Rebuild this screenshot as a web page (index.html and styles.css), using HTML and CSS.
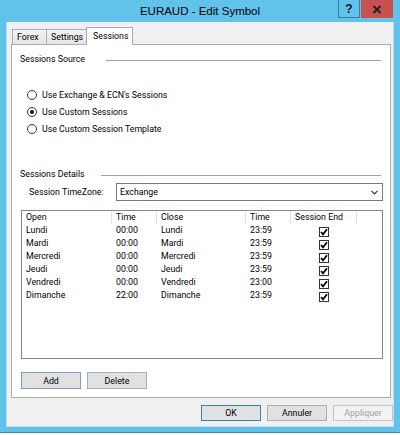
FILE: index.html
```html
<!DOCTYPE html>
<html>
<head>
<meta charset="utf-8">
<link rel="stylesheet" href="styles.css">
</head>
<body>
<div class="window">
  <div class="titlebar">
    <span class="title">EURAUD - Edit Symbol</span>
    <span class="cap-btn help">?</span>
    <span class="cap-btn close">
      <svg width="10" height="9" viewBox="0 0 10 9"><path d="M1.5 1 L8.5 8 M8.5 1 L1.5 8" stroke="#222" stroke-width="2" fill="none"/></svg>
    </span>
  </div>
  <div class="client">
    <div class="tabs">
      <span class="tab">Forex</span>
      <span class="tab">Settings</span>
      <span class="tab active">Sessions</span>
    </div>
    <div class="panel">
      <div class="group-head">
        <span>Sessions Source</span><span class="rule rule-source"></span>
      </div>
      <div class="radios">
        <div class="radio-row"><span class="radio"></span><span class="radio-label">Use Exchange &amp; ECN's Sessions</span></div>
        <div class="radio-row"><span class="radio checked"></span><span class="radio-label">Use Custom Sessions</span></div>
        <div class="radio-row"><span class="radio"></span><span class="radio-label">Use Custom Session Template</span></div>
      </div>
      <div class="group-head details">
        <span>Sessions Details</span><span class="rule rule-details"></span>
      </div>
      <div class="tz-row">
        <span class="tz-label">Session TimeZone:</span>
        <div class="select">
          <span>Exchange</span>
          <svg width="7" height="5" viewBox="0 0 7 5"><path d="M0.5 0.8 L3.5 3.8 L6.5 0.8" stroke="#333" stroke-width="1.2" fill="none"/></svg>
        </div>
      </div>
      <div class="grid">
        <div class="grid-row head">
          <span class="cell sep">Open</span>
          <span class="cell sep">Time</span>
          <span class="cell sep">Close</span>
          <span class="cell sep">Time</span>
          <span class="cell sep">Session End</span>
          <span class="cell"></span>
        </div>
        <div class="grid-row">
          <span class="cell">Lundi</span><span class="cell">00:00</span><span class="cell">Lundi</span><span class="cell">23:59</span>
          <span class="cell chk-cell"><span class="chk"><svg width="8" height="8" viewBox="0 0 8 8"><path d="M1 4 L3 6.3 L7 1.2" stroke="#000" stroke-width="1.8" fill="none"/></svg></span></span><span class="cell"></span>
        </div>
        <div class="grid-row">
          <span class="cell">Mardi</span><span class="cell">00:00</span><span class="cell">Mardi</span><span class="cell">23:59</span>
          <span class="cell chk-cell"><span class="chk"><svg width="8" height="8" viewBox="0 0 8 8"><path d="M1 4 L3 6.3 L7 1.2" stroke="#000" stroke-width="1.8" fill="none"/></svg></span></span><span class="cell"></span>
        </div>
        <div class="grid-row">
          <span class="cell">Mercredi</span><span class="cell">00:00</span><span class="cell">Mercredi</span><span class="cell">23:59</span>
          <span class="cell chk-cell"><span class="chk"><svg width="8" height="8" viewBox="0 0 8 8"><path d="M1 4 L3 6.3 L7 1.2" stroke="#000" stroke-width="1.8" fill="none"/></svg></span></span><span class="cell"></span>
        </div>
        <div class="grid-row">
          <span class="cell">Jeudi</span><span class="cell">00:00</span><span class="cell">Jeudi</span><span class="cell">23:59</span>
          <span class="cell chk-cell"><span class="chk"><svg width="8" height="8" viewBox="0 0 8 8"><path d="M1 4 L3 6.3 L7 1.2" stroke="#000" stroke-width="1.8" fill="none"/></svg></span></span><span class="cell"></span>
        </div>
        <div class="grid-row">
          <span class="cell">Vendredi</span><span class="cell">00:00</span><span class="cell">Vendredi</span><span class="cell">23:00</span>
          <span class="cell chk-cell"><span class="chk"><svg width="8" height="8" viewBox="0 0 8 8"><path d="M1 4 L3 6.3 L7 1.2" stroke="#000" stroke-width="1.8" fill="none"/></svg></span></span><span class="cell"></span>
        </div>
        <div class="grid-row">
          <span class="cell">Dimanche</span><span class="cell">22:00</span><span class="cell">Dimanche</span><span class="cell">23:59</span>
          <span class="cell chk-cell"><span class="chk"><svg width="8" height="8" viewBox="0 0 8 8"><path d="M1 4 L3 6.3 L7 1.2" stroke="#000" stroke-width="1.8" fill="none"/></svg></span></span><span class="cell"></span>
        </div>
      </div>
      <div class="grid-btns">
        <span class="btn focus">Add</span>
        <span class="btn">Delete</span>
      </div>
    </div>
    <div class="dlg-btns">
      <span class="btn default">OK</span>
      <span class="btn">Annuler</span>
      <span class="btn disabled">Appliquer</span>
    </div>
  </div>
</div>
</body>
</html>
```
FILE: styles.css
```css
body {
  margin: 0;
  width: 400px;
  height: 435px;
  overflow: hidden;
  background: #ffffff;
  font-family: Roboto, "Liberation Sans", sans-serif;
  font-size: 8.8px;
  color: #000;
}

.window {
  width: 400px;
  height: 433px;
  box-sizing: border-box;
  background: #62c3ea;
  border-bottom: 1px solid #3a8db0;
  padding: 0 6px 5px 6px;
  display: flex;
  flex-direction: column;
}

.titlebar {
  height: 22px;
  display: flex;
  align-items: flex-start;
  flex-shrink: 0;
}

.title {
  flex: 1;
  padding-left: 56px;
  text-align: center;
  font-family: "Liberation Sans", sans-serif;
  font-size: 11.5px;
  line-height: 22px;
}

.cap-btn {
  height: 18px;
  box-sizing: border-box;
  display: flex;
  align-items: center;
  justify-content: center;
}

.help {
  width: 22px;
  border: 1px solid #2f7fa3;
  border-top: none;
  font-family: "Liberation Sans", sans-serif;
  font-weight: bold;
  font-size: 12px;
  color: #111;
}

.close {
  width: 32px;
  margin-left: 1px;
  margin-right: 1px;
  background: #c75050;
}

.client {
  height: 405px;
  box-sizing: border-box;
  background: #f0f0f0;
  border: 1px solid #b9e2f3;
  border-top: none;
  display: flex;
  flex-direction: column;
}

.tabs {
  margin-top: 5px;
  height: 17px;
  padding-left: 5px;
  display: flex;
  align-items: flex-end;
}

.tab {
  height: 15px;
  box-sizing: border-box;
  border: 1px solid #acacac;
  border-bottom: none;
  background: linear-gradient(#f2f2f2, #e6e6e6);
  padding: 0 4px;
  line-height: 15px;
  margin-left: -1px;
  white-space: nowrap;
}

.tab:first-child {
  margin-left: 0;
  width: 35px;
}

.tab:nth-child(2) {
  width: 41px;
}

.tab.active {
  width: 47px;
  height: 18px;
  margin-bottom: -1px;
  background: #ffffff;
  position: relative;
  z-index: 1;
  padding-left: 6px;
  line-height: 17px;
}

.panel {
  margin-left: 4px;
  width: 380px;
  height: 354px;
  box-sizing: border-box;
  border: 1px solid #acacac;
  background: #ffffff;
  display: flex;
  flex-direction: column;
}

.group-head {
  margin-top: 8px;
  height: 12px;
  line-height: 12px;
  padding-left: 8px;
  display: flex;
  align-items: center;
  white-space: nowrap;
}

.group-head.details {
  margin-top: 31px;
}

.rule {
  flex: 1;
  height: 1px;
  background: #a0a0a0;
  margin-right: 9px;
  margin-top: 3px;
}

.rule-source {
  margin-left: 21px;
}

.rule-details {
  margin-left: 16px;
}

.radios {
  margin-top: 21px;
  display: flex;
  flex-direction: column;
}

.radio-row {
  height: 17px;
  padding-left: 15px;
  display: flex;
  align-items: center;
}

.radio {
  width: 10px;
  height: 10px;
  flex-shrink: 0;
  box-sizing: border-box;
  border: 1px solid #333;
  border-radius: 50%;
  background: #fff;
  display: flex;
  align-items: center;
  justify-content: center;
}

.radio.checked::after {
  content: "";
  width: 4px;
  height: 4px;
  border-radius: 50%;
  background: #111;
}

.radio-label {
  margin-left: 5px;
  white-space: nowrap;
}

.tz-row {
  margin-top: 3px;
  height: 18px;
  display: flex;
  align-items: center;
}

.tz-label {
  width: 104px;
  flex-shrink: 0;
  box-sizing: border-box;
  padding-left: 17px;
  white-space: nowrap;
}

.select {
  width: 267px;
  flex-shrink: 0;
  height: 18px;
  box-sizing: border-box;
  border: 1px solid #7a7a7a;
  background: #fff;
  display: flex;
  align-items: center;
  justify-content: space-between;
  padding: 0 4px 0 3px;
}

.grid {
  margin-top: 9px;
  margin-left: 9px;
  width: 362px;
  height: 149px;
  box-sizing: border-box;
  border: 1px solid #828790;
  background: #fff;
}

.grid-row {
  display: grid;
  grid-template-columns: 90px 45px 89px 45px 66px 1fr;
  height: 13px;
  line-height: 13px;
}

.cell {
  padding-left: 4px;
  white-space: nowrap;
  overflow: hidden;
}

.cell.sep {
  border-right: 1px solid #e2e2e2;
}

.chk-cell {
  display: flex;
  align-items: center;
  justify-content: center;
  padding-left: 0;
  padding-top: 2px;
}

.chk {
  width: 10px;
  height: 10px;
  box-sizing: border-box;
  border: 1px solid #333;
  background: #fff;
  display: flex;
  align-items: center;
  justify-content: center;
}

.grid-btns {
  margin-top: 13px;
  padding-left: 9px;
  display: flex;
  gap: 6px;
}

.btn {
  width: 60px;
  height: 17px;
  box-sizing: border-box;
  border: 1px solid #adadad;
  background: #e1e1e1;
  display: flex;
  align-items: center;
  justify-content: center;
}

.btn.focus {
  border-color: #7b9fc4;
}

.btn.default {
  border-color: #3c7fb1;
}

.btn.disabled {
  border-color: #c4c4c4;
  background: #f2f2f2;
  color: #a0a0a0;
}

.dlg-btns {
  margin-top: 7px;
  display: flex;
  justify-content: flex-end;
  gap: 6px;
}

.dlg-btns .btn {
  height: 16px;
}
```
